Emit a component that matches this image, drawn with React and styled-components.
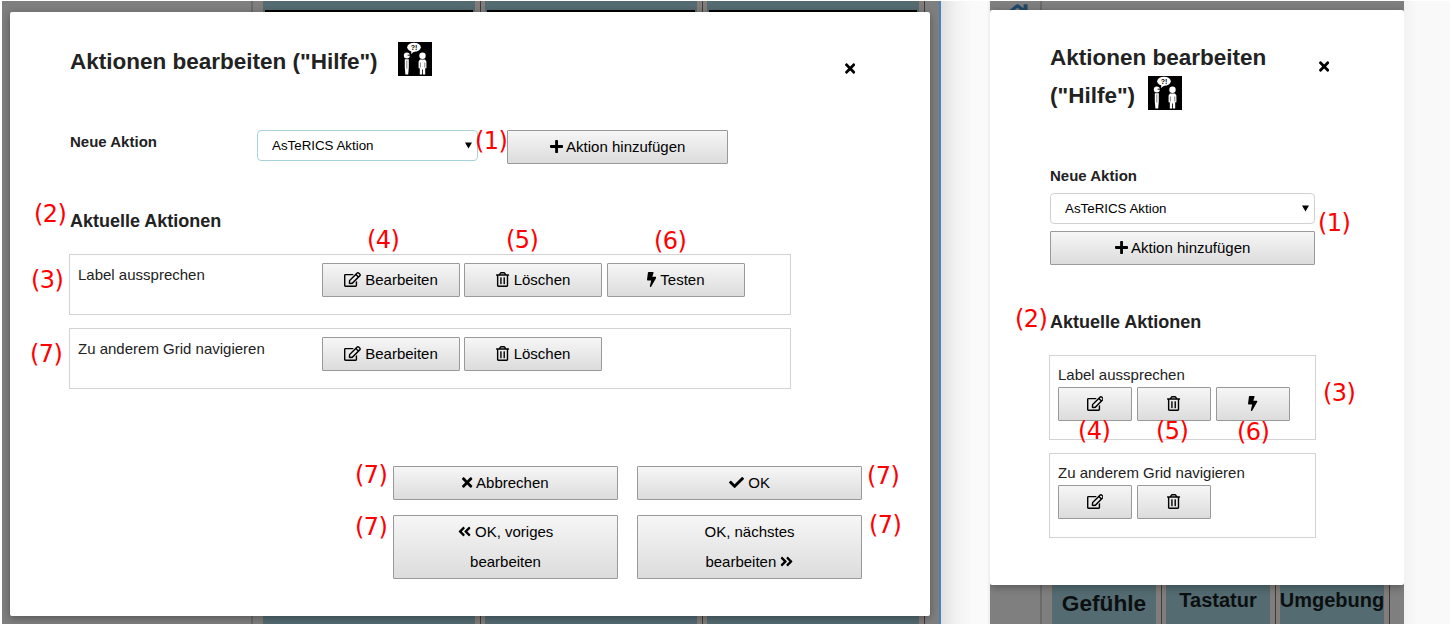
import React from "react";
import styled, { createGlobalStyle, css } from "styled-components";
import {
  FaRegEdit,
  FaRegTrashAlt,
  FaBolt,
  FaPlus,
  FaTimes,
  FaCheck,
  FaAngleDoubleLeft,
  FaAngleDoubleRight,
  FaHome,
} from "react-icons/fa";

const GlobalStyle = createGlobalStyle`
  *, *::before, *::after { box-sizing: border-box; }
  html { background: #fff; }
  body {
    margin: 0;
    overflow: hidden;
    color: #222;
    font-family: "Liberation Sans", Arial, Helvetica, sans-serif;
    font-size: 15px;
    line-height: 24px;
  }
`;

const Page = styled.main`
  display: flex;
  position: relative;
  width: 1450px;
  height: 624px;
  padding: 1px 0 0 2px;
  overflow: hidden;
  background: #fff;
`;

const Screen = styled.section`
  position: relative;
  display: flex;
  flex: none;
  width: ${(p) => p.$width}px;
  background: #7f7f7f;
  overflow: hidden;
  ${(p) => p.$edge && css`border-right: 2px solid #4a82b4;`}
`;

const Gutter = styled.div`
  flex: none;
  width: ${(p) => p.$width}px;
  background: ${(p) => p.$fill};
`;

const Sidebar = styled.aside`
  flex: none;
  width: ${(p) => p.$width}px;
  border-right: 2px solid #6a6a6a;
  padding: 0 0 0 13px;
  color: #1f4a6b;
  font-size: 29px;

  svg { display: block; }
`;

const Cells = styled.div`
  display: flex;
  flex: 1;
  padding-left: 6px;
  ${(p) => p.$lower && css`margin-top: 40px;`}
`;

const Cell = styled.div`
  flex: none;
  display: flex;
  flex-direction: column;
  justify-content: ${(p) => (p.$end ? "flex-end" : "space-between")};
  width: ${(p) => p.$width}px;
  border-right: 1px solid #3c3c3c;
  padding: 0 5px 0 4px;
  background: #827d7b;
`;

const CellBody = styled.div`
  height: 60px;
  padding: 0 2px;
  background: #536b71;
`;

const CellImage = styled.div`
  height: 40px;
  margin-top: 9px;
  background: #000;
`;

const CellLabel = styled.div`
  display: flex;
  justify-content: center;
  height: 39px;
  padding-top: ${(p) => p.$top}px;
  background: #536b71;
  color: #0c0f10;
  font-size: ${(p) => p.$size}px;
  font-weight: 700;
  line-height: 24px;
  white-space: nowrap;
`;

const Dialog = styled.div`
  position: absolute;
  display: flex;
  flex-direction: column;
  left: ${(p) => p.$left}px;
  top: ${(p) => p.$top}px;
  width: ${(p) => p.$width}px;
  height: ${(p) => p.$height}px;
  padding: ${(p) => p.$padding};
  border-radius: 2px;
  background: #fff;
  box-shadow: 0 2px 8px rgba(0, 0, 0, 0.33);
`;

const Header = styled.header`
  display: flex;
  justify-content: space-between;
  height: ${(p) => p.$height}px;
`;

const Title = styled.h1`
  margin: 0;
  padding-top: 1px;
  width: ${(p) => p.$width}px;
  font-size: 22.5px;
  line-height: 38px;

  svg {
    width: 34px;
    height: 34px;
    margin: -3px 0 0 ${(p) => p.$gap}px;
    vertical-align: -7px;
  }
`;

/* Glyphs keep the height of the text; $ratio is their width against it. */
const Glyph = styled.svg`
  width: ${(p) => p.$ratio}em;
  height: 1em;
  vertical-align: -0.125em;
`;

const CloseButton = styled.button`
  display: flex;
  align-self: flex-start;
  margin: ${(p) => p.$margin};
  padding: 0;
  border: 0;
  background: none;
  color: #000;
  font-size: 15px;
`;

const NewAction = styled.div`
  display: grid;
  grid-template-columns: ${(p) => (p.$narrow ? "265px" : "187px 221px 221px")};
  align-items: start;
  align-content: start;
  height: ${(p) => p.$height}px;
`;

const FieldLabel = styled.label`
  font-weight: 700;
  ${(p) => p.$narrow && css`height: 29px;`}
`;

const Select = styled.div`
  display: flex;
  align-items: center;
  justify-content: space-between;
  height: 31px;
  padding: 0 5px 0 14px;
  border: 1px solid ${(p) => (p.$focus ? "#a9d3da" : "#d1d1d1")};
  border-radius: 4px;
  background: #fff;
  color: #000;
  font-size: 13.333px;

  svg { width: 7px; height: 7px; margin-top: -1px; }
`;

const Button = styled.button`
  flex: none;
  width: ${(p) => p.$width}px;
  height: ${(p) => p.$height || 34}px;
  margin: ${(p) => p.$margin || 0};
  padding: 0 30px;
  border: 1px solid #999;
  border-radius: 1px;
  background: linear-gradient(#f6f6f6, #dcdcdc);
  color: #000;
  font: 15px/30px "Liberation Sans", Arial, sans-serif;

  ${(p) => p.$compact && css`padding: 0;`}
`;

const Subtitle = styled.h2`
  margin: 0;
  height: 45px;
  font-size: 18px;
  line-height: 24px;
`;

const ActionList = styled.ul`
  display: flex;
  flex-direction: column;
  gap: 13px;
  margin: 0 0 0 -1px;
  padding: 0;
  list-style: none;
`;

const ActionItem = styled.li`
  display: flex;
  flex-direction: ${(p) => (p.$narrow ? "column" : "row")};
  width: ${(p) => (p.$narrow ? 267 : 722)}px;
  height: ${(p) => (p.$narrow ? 85 : 61)}px;
  padding: ${(p) => (p.$narrow ? "7px 8px" : "8px")};
  border: 1px solid #d3d3d3;
`;

const ActionName = styled.span`
  flex: none;
  width: ${(p) => (p.$narrow ? "auto" : "244px")};
`;

const ActionButtons = styled.div`
  display: flex;
  gap: ${(p) => (p.$narrow ? 5 : 4.4)}px;
`;

const Footer = styled.footer`
  display: grid;
  grid-template-columns: 225px 225px;
  gap: 15px 19px;
  margin: 77px 0 0 323px;
`;

const Note = styled.span`
  position: absolute;
  left: ${(p) => p.$x}px;
  top: ${(p) => p.$y}px;
  color: #f00;
  font: 24px/28px "DejaVu Sans", sans-serif;
  letter-spacing: -0.6px;
`;

const Pictogram = () => (
  <svg viewBox="0 0 34 34" aria-hidden="true">
    <rect width="34" height="34" fill="#000" />
    <ellipse cx="16" cy="5.2" rx="6.8" ry="4.5" fill="#fff" />
    <path d="M13.5 8.5 13 12 17 9z" fill="#fff" />
    <text x="16" y="7.8" fontSize="7" textAnchor="middle" fill="#000">?!</text>
    <g fill="#fff">
      <circle cx="8.8" cy="13.6" r="3" />
      <circle cx="24.5" cy="13.8" r="3.2" />
      <path d="M6.8 17.2h4v8l-.6 7.3H7.4l-.6-7.3z" />
      <path d="M22 17.6h5l1.4 2v6.6h-1.2v6.3h-2.3v-5h-.8v5h-2.3v-6.3h-1.2v-6.6z" />
    </g>
    <path d="M8.8 18.5v8M22.4 20.5v5M26.8 20.5v5" stroke="#333" strokeWidth=".6" />
    <path d="M9.6 13.2h3" stroke="#000" strokeWidth=".9" />
  </svg>
);

const ActionSelect = ({ focus }) => (
  <Select $focus={focus}>
    AsTeRICS Aktion
    <svg viewBox="0 0 7 7"><path d="M0 .5h7L3.5 6.5z" /></svg>
  </Select>
);

const EditIcon = () => <Glyph as={FaRegEdit} $ratio={1.125} />;
const TrashIcon = () => <Glyph as={FaRegTrashAlt} $ratio={0.875} />;
const BoltIcon = () => <Glyph as={FaBolt} $ratio={0.625} />;
const PlusIcon = () => <Glyph as={FaPlus} $ratio={0.875} />;
const TimesIcon = () => <Glyph as={FaTimes} $ratio={0.6875} />;
const CheckIcon = () => <Glyph as={FaCheck} $ratio={1} />;
const PreviousIcon = () => <Glyph as={FaAngleDoubleLeft} $ratio={0.875} />;
const NextIcon = () => <Glyph as={FaAngleDoubleRight} $ratio={0.875} />;

const ACTIONS = [
  { name: "Label aussprechen", testable: true },
  { name: "Zu anderem Grid navigieren", testable: false },
];

const Actions = ({ narrow }) => (
  <ActionList>
    {ACTIONS.map(({ name, testable }) => (
      <ActionItem key={name} $narrow={narrow}>
        <ActionName $narrow={narrow}>{name}</ActionName>
        <ActionButtons $narrow={narrow}>
          <Button $compact $width={narrow ? 74 : 138}><EditIcon />{!narrow && " Bearbeiten"}</Button>
          <Button $compact $width={narrow ? 74 : 138}><TrashIcon />{!narrow && " Löschen"}</Button>
          {testable && (
            <Button $compact $width={narrow ? 74 : 138}><BoltIcon />{!narrow && " Testen"}</Button>
          )}
        </ActionButtons>
      </ActionItem>
    ))}
  </ActionList>
);

const NOTES = [
  ["(1)", 475, 127], ["(2)", 34, 200], ["(3)", 31, 266], ["(7)", 30, 340],
  ["(4)", 367, 226], ["(5)", 506, 226], ["(6)", 654, 227],
  ["(7)", 355, 461], ["(7)", 355, 513], ["(7)", 867, 462], ["(7)", 869, 511],
  ["(1)", 1318, 209], ["(2)", 1015, 305], ["(3)", 1323, 379],
  ["(4)", 1078, 417], ["(5)", 1156, 417], ["(6)", 1237, 418],
];

export default function App() {
  return (
    <>
      <GlobalStyle />
      <Page>
        <Screen $width={939} $edge>
          <Sidebar $width={251} />
          <Cells>
            {[0, 1, 2].map((i) => (
              <Cell key={i} $width={222}>
                <CellBody><CellImage /></CellBody>
                <CellBody />
              </Cell>
            ))}
          </Cells>
          <Dialog $left={8} $top={11} $width={920} $height={604} $padding="30px 73px 0 60px">
            <Header $height={88}>
              <Title $width={400} $gap={14}>Aktionen bearbeiten ("Hilfe") <Pictogram /></Title>
              <CloseButton $margin="19px 2px 0 0" aria-label="Schließen"><TimesIcon /></CloseButton>
            </Header>
            <NewAction $height={79}>
              <FieldLabel>Neue Aktion</FieldLabel>
              <ActionSelect focus />
              <Button $width={221} $margin="0 0 0 29px"><PlusIcon /> Aktion hinzufügen</Button>
            </NewAction>
            <Subtitle>Aktuelle Aktionen</Subtitle>
            <Actions />
            <Footer>
              <Button $width={225}><TimesIcon /> Abbrechen</Button>
              <Button $width={225}><CheckIcon /> OK</Button>
              <Button $width={225} $height={64}><PreviousIcon /> OK, voriges<br />bearbeiten</Button>
              <Button $width={225} $height={64}>OK, nächstes<br />bearbeiten <NextIcon /></Button>
            </Footer>
          </Dialog>
        </Screen>
        <Gutter $width={49} $fill="linear-gradient(90deg, #e0e0e0, #f3f3f3 16px, #fafafa 32px, #fafafa 46px, #ececec)" />
        <Screen $width={414}>
          <Sidebar $width={52}><FaHome /></Sidebar>
          <Cells $lower>
            <Cell $width={114} $end><CellLabel $size={22.7} $top={6}>Gefühle</CellLabel></Cell>
            <Cell $width={114} $end><CellLabel $size={20} $top={3}>Tastatur</CellLabel></Cell>
            <Cell $width={114} $end><CellLabel $size={20} $top={3}>Umgebung</CellLabel></Cell>
          </Cells>
          <Dialog $left={0} $top={9} $width={414} $height={575} $padding="28px 75px 0 60px">
            <Header $height={126}>
              <Title $width={240} $gap={7}>Aktionen bearbeiten ("Hilfe") <Pictogram /></Title>
              <CloseButton $margin="21px 0 0 0" aria-label="Schließen"><TimesIcon /></CloseButton>
            </Header>
            <NewAction $narrow $height={146}>
              <FieldLabel $narrow>Neue Aktion</FieldLabel>
              <ActionSelect />
              <Button $width={265} $margin="7px 0 0"><PlusIcon /> Aktion hinzufügen</Button>
            </NewAction>
            <Subtitle>Aktuelle Aktionen</Subtitle>
            <Actions narrow />
          </Dialog>
        </Screen>
        <Gutter $width={46} $fill="linear-gradient(90deg, #f2f2f2, #f9f9f9 14px)" />
        {NOTES.map(([text, x, y]) => (
          <Note key={`${x}-${y}`} $x={x} $y={y}>{text}</Note>
        ))}
      </Page>
    </>
  );
}
